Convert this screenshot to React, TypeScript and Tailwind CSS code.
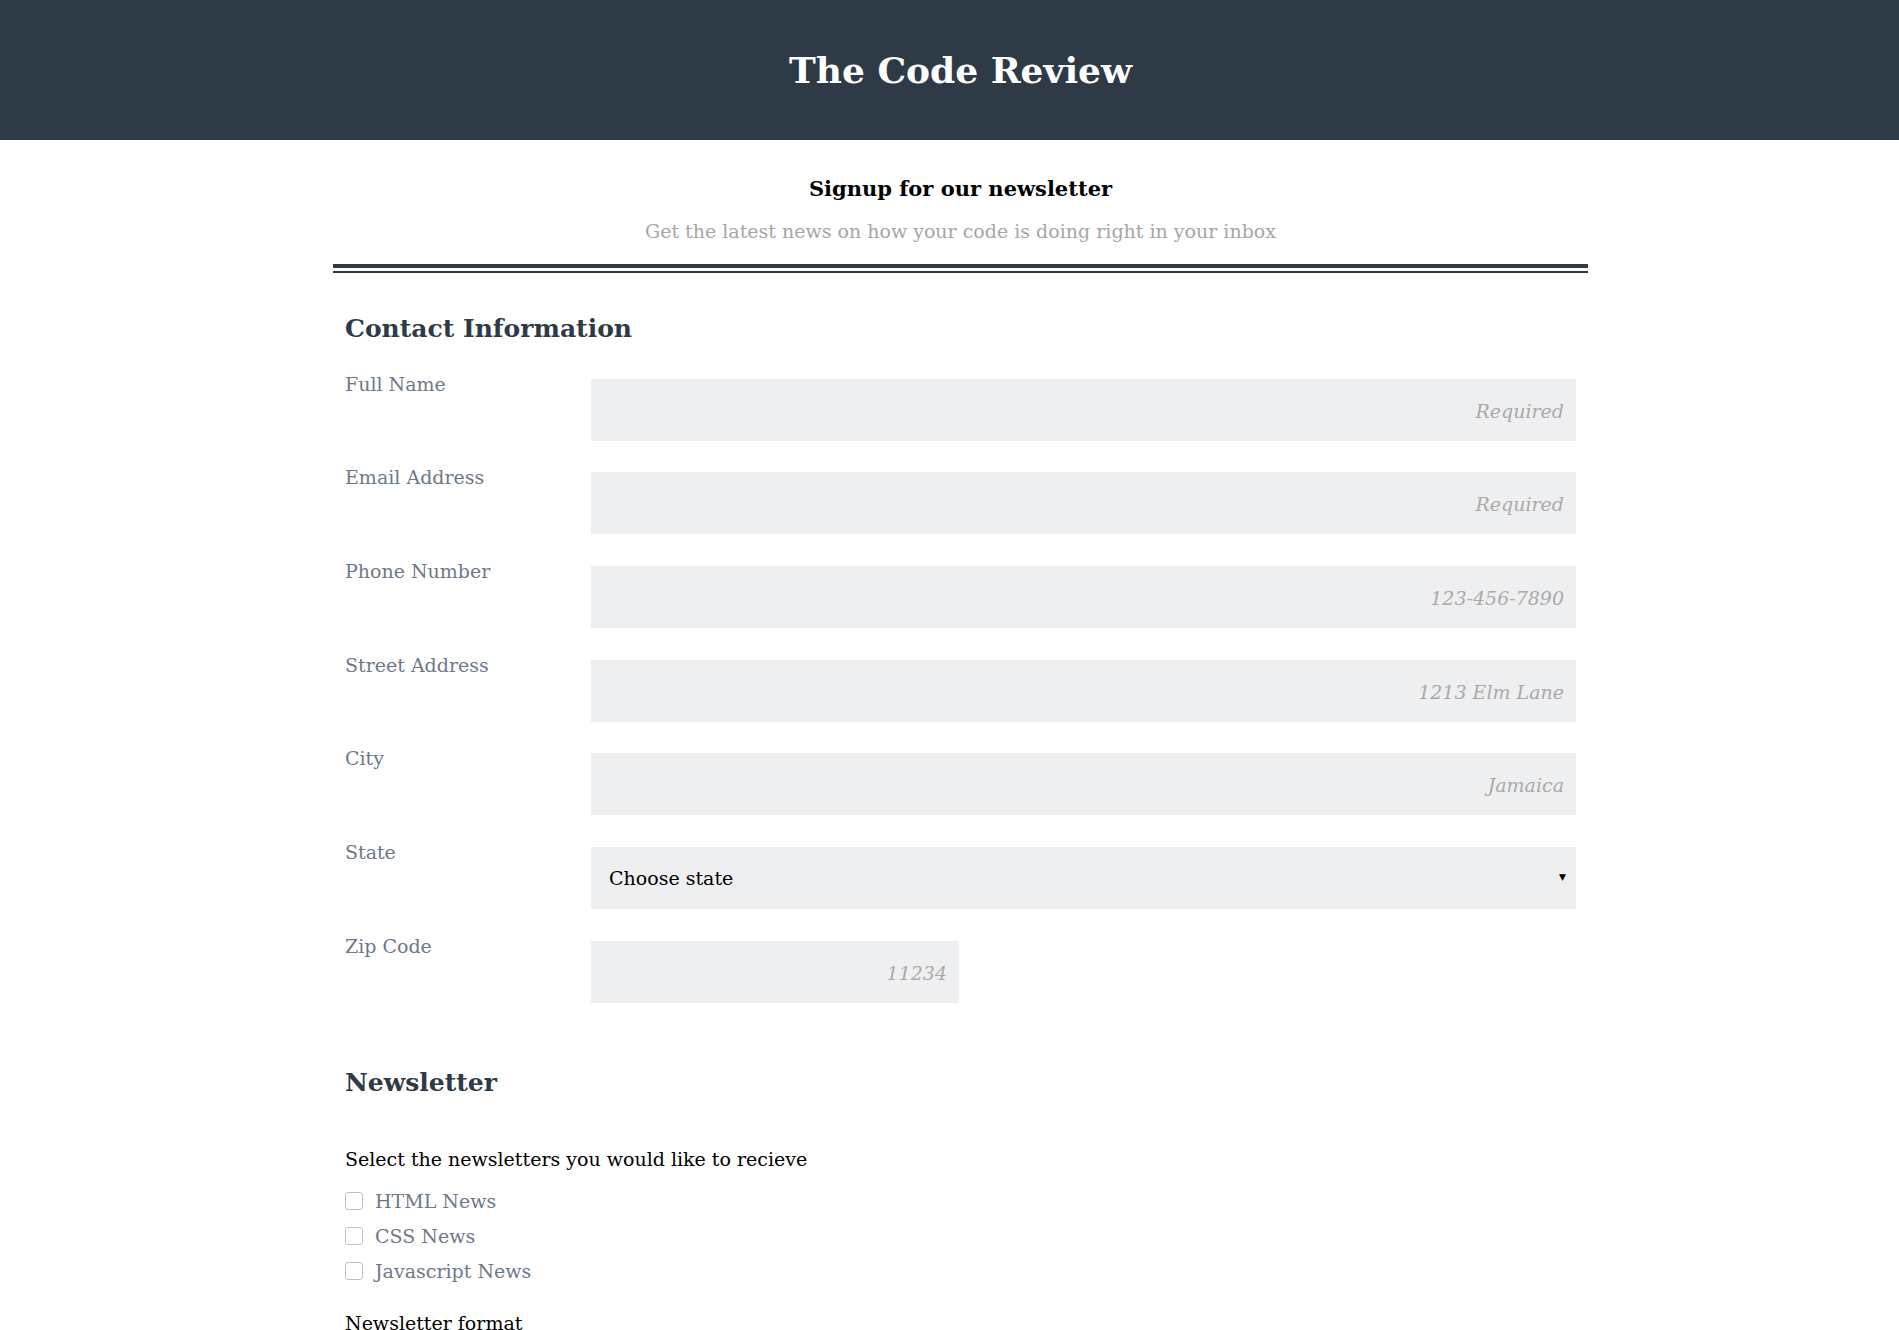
const serif = "font-['DejaVu_Serif','Liberation_Serif',serif]";

const fields = [
  { label: "Full Name", placeholder: "Required" },
  { label: "Email Address", placeholder: "Required" },
  { label: "Phone Number", placeholder: "123-456-7890" },
  { label: "Street Address", placeholder: "1213 Elm Lane" },
  { label: "City", placeholder: "Jamaica" },
];

const Field = ({ label, placeholder }: { label: string; placeholder: string }) => (
  <div className="flex">
    <label className="w-[246px] shrink-0 -mt-[9px] text-[19px] leading-[28px] text-[#6c7989]">
      {label}
    </label>
    <input
      placeholder={placeholder}
      className="flex-1 h-[62px] bg-[#eeeff1] px-[12px] pt-[2px] text-right text-[19px] outline-none placeholder:italic placeholder:text-[#a9a9ab]"
    />
  </div>
);

const Check = ({ label }: { label: string }) => (
  <label className="flex items-center gap-[12px] h-[35px]">
    <span className="w-[18px] h-[18px] rounded-[3px] border border-[#c2c2c2] bg-white" />
    <span className="text-[19px] text-[#6c7989]">{label}</span>
  </label>
);

export default function App() {
  return (
    <div className={`${serif} min-h-screen bg-white`}>
      <header className="h-[140px] bg-[#2e3a46] flex items-center justify-center pl-[22px]">
        <h1 className="text-[36px] font-bold text-white">The Code Review</h1>
      </header>

      <div className="pl-[22px]">
        <div className="mx-auto w-[1255px]">
          <div className="pt-[34px] text-center">
            <h2 className="text-[21px] font-bold leading-[30px] text-black">Signup for our newsletter</h2>
            <p className="mt-[14px] text-[19px] leading-[26px] text-[#a6a6a6]">
              Get the latest news on how your code is doing right in your inbox
            </p>
          </div>
          <div className="mt-[20px] h-[4px] bg-[#2e3a46]" />
          <div className="mt-[3px] h-[1.5px] bg-[#2e3a46]" />

          <form className="px-[12px]">
            <h3 className="mt-[38px] text-[25px] font-bold leading-[36px] text-[#2e3a46]">Contact Information</h3>
            <div className="mt-[32px] flex flex-col gap-y-[31.7px]">
              {fields.map((f) => (
                <Field key={f.label} {...f} />
              ))}
              <div className="flex">
                <label className="w-[246px] shrink-0 -mt-[9px] text-[19px] leading-[28px] text-[#6c7989]">
                  State
                </label>
                <div className="flex-1 h-[62px] bg-[#eeeff1] flex items-center justify-between pl-[18px] pr-[10px]">
                  <span className="text-[19px] text-black">Choose state</span>
                  <span className="text-[9px] text-black">▼</span>
                </div>
              </div>
              <div className="flex">
                <label className="w-[246px] shrink-0 -mt-[9px] text-[19px] leading-[28px] text-[#6c7989]">
                  Zip Code
                </label>
                <input
                  placeholder="11234"
                  className="w-[368px] h-[62px] bg-[#eeeff1] px-[12px] pt-[2px] text-right text-[19px] outline-none placeholder:italic placeholder:text-[#a9a9ab]"
                />
              </div>
            </div>

            <h3 className="mt-[62px] text-[25px] font-bold leading-[36px] text-[#2e3a46]">Newsletter</h3>
            <p className="mt-[44px] text-[19px] leading-[28px] text-black">
              Select the newsletters you would like to recieve
            </p>
            <div className="mt-[11px] flex flex-col">
              <Check label="HTML News" />
              <Check label="CSS News" />
              <Check label="Javascript News" />
            </div>
            <p className="mt-[20px] text-[19px] leading-[28px] text-black">Newsletter format</p>
            <div className="h-[200px]" />
          </form>
        </div>
      </div>
    </div>
  );
}
